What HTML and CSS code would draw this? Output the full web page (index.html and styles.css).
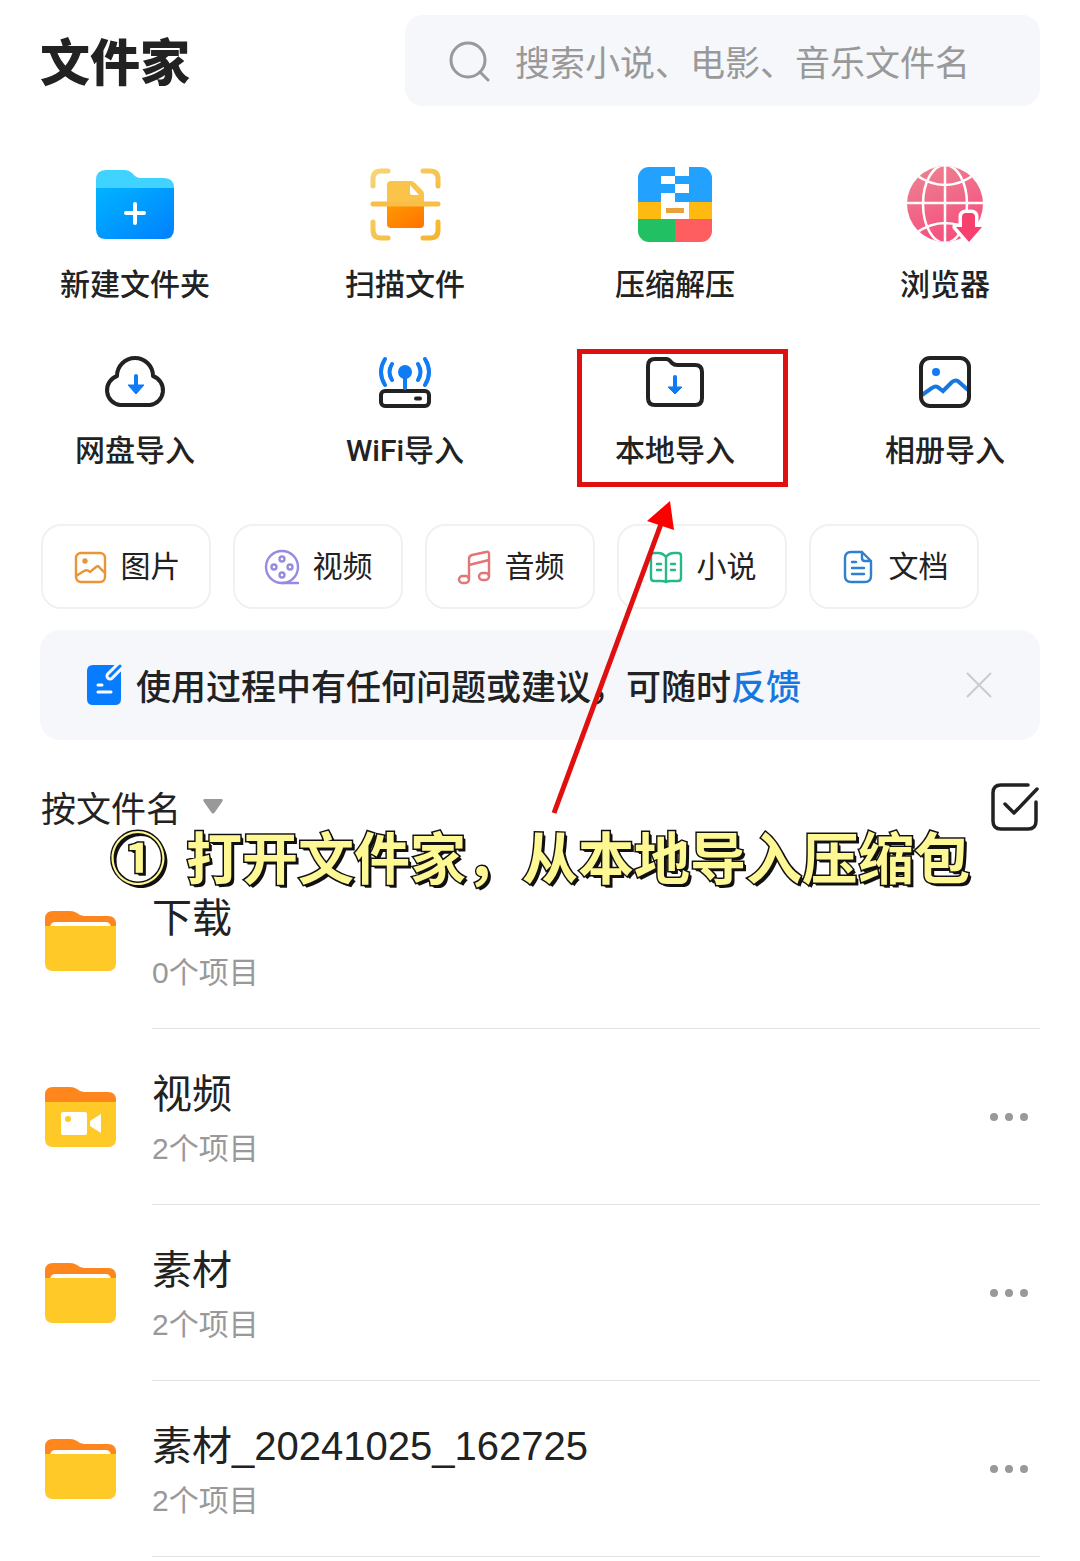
FILE: index.html
```html
<!DOCTYPE html>
<html lang="zh-CN">
<head>
<meta charset="utf-8">
<meta name="viewport" content="width=device-width, initial-scale=1">
<title>文件家</title>
<link rel="stylesheet" href="styles.css">
</head>
<body>
<div class="page">
  <header class="header">
    <h1 class="logo">文件家</h1>
    <label class="search">
      <svg width="42" height="42" viewBox="0 0 42 42" fill="none" stroke="#999" stroke-width="3" stroke-linecap="round" aria-hidden="true"><circle cx="19" cy="20" r="17"/><path d="M31 32l8 8"/></svg>
      <input class="search-input" type="search" aria-label="搜索" placeholder="搜索小说、电影、音乐文件名">
    </label>
  </header>

  <main>
    <nav class="shortcuts" aria-label="快捷功能">
      <button class="shortcut shortcut-large" type="button">
        <span class="shortcut-icon">
          <svg width="78" height="69" viewBox="0 0 78 69" aria-hidden="true">
            <defs><linearGradient id="blue" x1="0" y1="0" x2="1" y2="1"><stop offset="0" stop-color="#00b4ff"/><stop offset="1" stop-color="#0080ff"/></linearGradient></defs>
            <path fill="#40d3ff" d="M0 20V10Q0 0 10 0H29Q33 0 36 3L39 6Q41 8 45 8H68Q78 8 78 18V20Z"/>
            <path fill="url(#blue)" d="M0 18H78V59Q78 69 68 69H10Q0 69 0 59Z"/>
            <path stroke="#fff" stroke-width="4" stroke-linecap="round" d="M39 34V53M30 43H48"/>
          </svg>
        </span>
        <span>新建文件夹</span>
      </button>
      <button class="shortcut shortcut-large" type="button">
        <span class="shortcut-icon">
          <svg width="71" height="73" viewBox="0 0 71 73" fill="none" aria-hidden="true">
            <defs>
              <linearGradient id="orange" x1="0" y1="0" x2="1" y2="1"><stop offset="0" stop-color="#ff9a00"/><stop offset="1" stop-color="#ff7200"/></linearGradient>
              <linearGradient id="amber" x1="0" y1="0" x2="1" y2="1"><stop offset="0" stop-color="#f7d477"/><stop offset="1" stop-color="#f6b42c"/></linearGradient>
            </defs>
            <path stroke="url(#amber)" stroke-width="5" stroke-linecap="round" d="M3 18V11Q3 3 11 3H18M53 3H60Q68 3 68 11V18M3 54V62Q3 70 11 70H18M53 70H60Q68 70 68 62V54"/>
            <path fill="#fac349" d="M17 37V17Q17 13 21 13H41Q43 13 45 15L53 23Q54 24 54 27V37Z"/>
            <path fill="url(#orange)" d="M17 36H54V56Q54 60 50 60H21Q17 60 17 56Z"/>
            <path fill="#fff" d="M40 17L49 27H42Q40 27 40 25Z"/>
            <path stroke="#f8be45" stroke-width="5" stroke-linecap="round" d="M3 36H68"/>
          </svg>
        </span>
        <span>扫描文件</span>
      </button>
      <button class="shortcut shortcut-large" type="button">
        <span class="shortcut-icon">
          <svg width="74" height="75" viewBox="0 0 74 75" aria-hidden="true">
            <clipPath id="zip"><rect width="74" height="75" rx="11"/></clipPath>
            <g clip-path="url(#zip)">
              <path fill="#23a1ff" d="M0 0H74V35H0Z"/><path fill="#ffba12" d="M0 35H74V52H0Z"/>
              <path fill="#20c063" d="M0 52H37V75H0Z"/><path fill="#ff5e60" d="M37 52H74V75H37Z"/>
              <path fill="#fff" d="M37 0H51V9H37ZM23 9H37V17H23ZM37 17H51V26H37ZM23 26H37V35H51V52H23Z"/>
              <path fill="#e9a23b" d="M28 41H46V46H28Z"/>
            </g>
          </svg>
        </span>
        <span>压缩解压</span>
      </button>
      <button class="shortcut shortcut-large" type="button">
        <span class="shortcut-icon">
          <svg width="76" height="76" viewBox="0 0 76 76" fill="none" aria-hidden="true">
            <defs>
              <linearGradient id="pink" x1="0" y1="0" x2="0.400" y2="1"><stop offset="0" stop-color="#ec8592"/><stop offset="1" stop-color="#f5517f"/></linearGradient>
              <clipPath id="globe"><circle cx="38" cy="38" r="38"/></clipPath>
            </defs>
            <circle cx="38" cy="38" r="38" fill="url(#pink)"/>
            <g clip-path="url(#globe)" stroke="#fff" stroke-width="2.500"><path d="M38 0V76M0 37H76M9 9Q38 29 67 9M9 67Q38 47 67 67"/><ellipse cx="38" cy="38" rx="22" ry="39"/></g>
            <path fill="#f8406f" stroke="#fff" stroke-width="7" stroke-linejoin="round" paint-order="stroke" d="M55 61V51Q55 47 59 47H64Q68 47 68 51V61H75L62 76L49 61Z"/>
          </svg>
        </span>
        <span>浏览器</span>
      </button>
      <button class="shortcut" type="button">
        <span class="shortcut-icon">
          <svg width="64" height="52" viewBox="0 0 64 52" fill="none" aria-hidden="true">
            <path stroke="#222" stroke-width="4" stroke-linejoin="round" d="M17 49A15 15 0 0 1 14 20A18 18 0 0 1 50 20A15 15 0 0 1 47 49Z"/>
            <path stroke="#0f7bf5" stroke-width="4" stroke-linecap="round" d="M33 20V32"/><path fill="#0f7bf5" d="M25 29H41L33 38Z" stroke="#0f7bf5" stroke-linejoin="round"/>
          </svg>
        </span>
        <span>网盘导入</span>
      </button>
      <button class="shortcut" type="button">
        <span class="shortcut-icon">
          <svg width="54" height="52" viewBox="0 0 54 52" fill="none" stroke-linecap="round" aria-hidden="true">
            <rect x="3" y="35" width="48" height="15" rx="4" stroke="#222" stroke-width="4"/>
            <path stroke="#222" stroke-width="4" d="M38 42.500H42"/>
            <path stroke="#0f7bf5" stroke-width="4" d="M27 18V32M14 8Q9 16 14 24M40 8Q45 16 40 24M7 3Q-1 16 7 29M47 3Q55 16 47 29"/>
            <circle cx="27" cy="16" r="7" fill="#0f7bf5"/>
          </svg>
        </span>
        <span>WiFi导入</span>
      </button>
      <button class="shortcut shortcut-marked" type="button">
        <span class="shortcut-icon">
          <svg width="58" height="50" viewBox="0 0 58 50" fill="none" aria-hidden="true">
            <path stroke="#222" stroke-width="4" stroke-linejoin="round" d="M2 9Q2 2 9 2H20Q23 2 25 5L26 6Q28 8 31 8H49Q56 8 56 15V41Q56 48 49 48H9Q2 48 2 41Z"/>
            <path stroke="#0f7bf5" stroke-width="4" stroke-linecap="round" d="M29 20V32"/><path fill="#0f7bf5" stroke="#0f7bf5" stroke-linejoin="round" d="M22 30H36L29 37Z"/>
          </svg>
        </span>
        <span>本地导入</span>
      </button>
      <button class="shortcut" type="button">
        <span class="shortcut-icon">
          <svg width="54" height="54" viewBox="0 0 54 54" fill="none" aria-hidden="true">
            <path stroke="#1677e0" stroke-width="4" d="M4 40L14 33Q18 30 21 33L25 36L34 27Q38 24 41 27L50 35"/>
            <circle cx="18" cy="17" r="4" fill="#0f7bf5"/>
            <rect x="3" y="3" width="48" height="48" rx="9" stroke="#222" stroke-width="4"/>
          </svg>
        </span>
        <span>相册导入</span>
      </button>
    </nav>

    <nav class="categories" aria-label="文件分类">
      <button class="chip" type="button">
        <svg width="36" height="36" viewBox="0 0 36 36" fill="none" stroke="#eb9434" stroke-width="2.400" aria-hidden="true"><rect x="4" y="4" width="29" height="29" rx="5"/><path d="M4 27L12 22Q15 20 18 23L24 18Q26 16 28 19L33 24"/><circle cx="13" cy="12" r="1.500" fill="#eb9434"/></svg>
        <span>图片</span>
      </button>
      <button class="chip" type="button">
        <svg width="36" height="36" viewBox="0 0 36 36" fill="none" stroke="#958be0" stroke-width="2.400" stroke-linecap="round" aria-hidden="true"><circle cx="18" cy="18" r="16"/><path d="M18 34H34"/><circle cx="18" cy="10" r="2.500"/><circle cx="10" cy="18" r="2.500"/><circle cx="26" cy="18" r="2.500"/><circle cx="18" cy="26" r="2.500"/></svg>
        <span>视频</span>
      </button>
      <button class="chip" type="button">
        <svg width="36" height="36" viewBox="0 0 36 36" fill="none" stroke="#e37576" stroke-width="2.400" stroke-linejoin="round" aria-hidden="true"><path d="M13 30V10Q13 7 16 6L30 3Q33 2 33 5V27M13 16L33 11"/><rect x="3" y="27" width="10" height="7" rx="3.500"/><rect x="23" y="24" width="10" height="7" rx="3.500"/></svg>
        <span>音频</span>
      </button>
      <button class="chip" type="button">
        <svg width="36" height="36" viewBox="0 0 36 36" fill="none" stroke="#25b98a" stroke-width="2.400" stroke-linejoin="round" stroke-linecap="round" aria-hidden="true"><path d="M18 8Q15 4 10 4H6Q3 4 3 7V29Q3 32 6 32H13Q16 32 18 33Q20 32 23 32H30Q33 32 33 29V7Q33 4 30 4H26Q21 4 18 8ZM18 8V33M9 15H13M9 21H13M23 15H27M23 21H27"/></svg>
        <span>小说</span>
      </button>
      <button class="chip" type="button">
        <svg width="36" height="36" viewBox="0 0 36 36" fill="none" stroke="#2e80d0" stroke-width="2.400" stroke-linejoin="round" stroke-linecap="round" aria-hidden="true"><path d="M22 3H11Q5 3 5 9V27Q5 33 11 33H25Q31 33 31 27V12ZM22 3V9Q22 12 25 12H31M12 13H16M12 19H24M12 25H24"/></svg>
        <span>文档</span>
      </button>
    </nav>

    <section class="notice">
      <svg width="36" height="42" viewBox="0 0 36 42" fill="none" stroke-linecap="round" aria-hidden="true">
        <path fill="#087cff" d="M7 1H29L35 8V35Q35 41 29 41H7Q1 41 1 35V7Q1 1 7 1Z"/>
        <path stroke="#f5f7fa" stroke-width="9" d="M24 12L35 1"/><path stroke="#087cff" stroke-width="3" d="M24 12L34 2"/>
        <path stroke="#fff" stroke-width="3" d="M12 21H16M12 28H25"/>
      </svg>
      <p class="notice-text">使用过程中有任何问题或建议，可随时<a class="notice-link" href="#feedback">反馈</a></p>
      <button class="icon-button" type="button" aria-label="关闭">
        <svg width="26" height="26" viewBox="0 0 26 26" stroke="#c9cbcd" stroke-width="2" aria-hidden="true"><path d="M1 1L25 25M25 1L1 25"/></svg>
      </button>
    </section>

    <div class="toolbar">
      <div class="sort">
        <select class="sort-select" aria-label="排序方式"><option>按文件名</option></select>
        <svg width="20" height="16" viewBox="0 0 20 16" fill="#999" aria-hidden="true"><path d="M2 0H18Q21 0 19 3L12 13Q10 16 8 13L1 3Q-1 0 2 0Z"/></svg>
      </div>
      <button class="select-button" type="button" aria-label="多选">
        <svg width="48" height="48" viewBox="0 0 48 48" fill="none" stroke="#222" stroke-width="3.500" stroke-linecap="round" stroke-linejoin="round" aria-hidden="true"><path d="M37 2H10Q2 2 2 10V38Q2 46 10 46H37Q45 46 45 38V19M14 21L23 30L46 6"/></svg>
      </button>
    </div>

    <ul class="files">
      <li class="file">
        <svg class="file-icon" width="72" height="62" viewBox="0 0 72 62" aria-hidden="true"><path fill="#ff861c" d="M0 20V9Q0 1 8 1H25Q29 1 32 3Q35 6 39 6H63Q71 6 71 14V20Z"/><path fill="#fff" d="M5 17Q6 12 10 12H61Q65 12 66 17Z"/><path fill="#ffc928" d="M0 16H71V53Q71 61 63 61H8Q0 61 0 53Z"/></svg>
        <div class="file-body"><div class="file-text"><h2 class="file-name">下载</h2><p class="file-count">0个项目</p></div></div>
      </li>
      <li class="file">
        <svg class="file-icon" width="72" height="62" viewBox="0 0 72 62" aria-hidden="true"><path fill="#ff861c" d="M0 20V9Q0 1 8 1H25Q29 1 32 3Q35 6 39 6H63Q71 6 71 14V20Z"/><path fill="#ffc928" d="M0 16H71V53Q71 61 63 61H8Q0 61 0 53Z"/><rect x="16" y="26" width="26" height="23" rx="2" fill="#fff"/><path fill="#fff" d="M45 35L56 28V47L45 40Z"/><circle cx="23" cy="33" r="3" fill="#ffc928"/></svg>
        <div class="file-body"><div class="file-text"><h2 class="file-name">视频</h2><p class="file-count">2个项目</p></div>
          <button class="icon-button" type="button" aria-label="更多"><svg width="40" height="10" viewBox="0 0 40 10" fill="#999" aria-hidden="true"><circle cx="5" cy="5" r="4"/><circle cx="20" cy="5" r="4"/><circle cx="35" cy="5" r="4"/></svg></button></div>
      </li>
      <li class="file">
        <svg class="file-icon" width="72" height="62" viewBox="0 0 72 62" aria-hidden="true"><path fill="#ff861c" d="M0 20V9Q0 1 8 1H25Q29 1 32 3Q35 6 39 6H63Q71 6 71 14V20Z"/><path fill="#fff" d="M5 17Q6 12 10 12H61Q65 12 66 17Z"/><path fill="#ffc928" d="M0 16H71V53Q71 61 63 61H8Q0 61 0 53Z"/></svg>
        <div class="file-body"><div class="file-text"><h2 class="file-name">素材</h2><p class="file-count">2个项目</p></div>
          <button class="icon-button" type="button" aria-label="更多"><svg width="40" height="10" viewBox="0 0 40 10" fill="#999" aria-hidden="true"><circle cx="5" cy="5" r="4"/><circle cx="20" cy="5" r="4"/><circle cx="35" cy="5" r="4"/></svg></button></div>
      </li>
      <li class="file">
        <svg class="file-icon" width="72" height="62" viewBox="0 0 72 62" aria-hidden="true"><path fill="#ff861c" d="M0 20V9Q0 1 8 1H25Q29 1 32 3Q35 6 39 6H63Q71 6 71 14V20Z"/><path fill="#fff" d="M5 17Q6 12 10 12H61Q65 12 66 17Z"/><path fill="#ffc928" d="M0 16H71V53Q71 61 63 61H8Q0 61 0 53Z"/></svg>
        <div class="file-body"><div class="file-text"><h2 class="file-name">素材_20241025_162725</h2><p class="file-count">2个项目</p></div>
          <button class="icon-button" type="button" aria-label="更多"><svg width="40" height="10" viewBox="0 0 40 10" fill="#999" aria-hidden="true"><circle cx="5" cy="5" r="4"/><circle cx="20" cy="5" r="4"/><circle cx="35" cy="5" r="4"/></svg></button></div>
      </li>
    </ul>
  </main>

  <svg class="arrow" width="128" height="316" viewBox="0 0 128 316" aria-hidden="true"><path stroke="#e01010" stroke-width="5" d="M4 313L111 24"/><path fill="#fc0000" d="M120 1L97 21L124 30Z"/></svg>
  <p class="caption"><span>①</span><span>打开文件家，从本地导入压缩包</span></p>
</div>
</body>
</html>
```
FILE: styles.css
```css
* {
  box-sizing: border-box;
}

body {
  margin: 0;
  background: #fff;
  color: #222;
  font-family: "Noto Sans CJK SC", sans-serif;
}

h1, h2, p, ul {
  margin: 0;
  padding: 0;
}

button, input, select {
  border: 0;
  padding: 0;
  background: none;
  color: inherit;
  font: inherit;
}

svg {
  display: block;
  flex: none;
}

.page {
  position: relative;
  padding: 15px 0 4px;
}

.header {
  display: flex;
  align-items: center;
  justify-content: space-between;
  padding: 0 40px;
}

.logo {
  padding-bottom: 4px;
  font-size: 50px;
  line-height: 70px;
  font-weight: 900;
}

.search {
  display: flex;
  align-items: center;
  gap: 24px;
  width: 635px;
  height: 91px;
  padding: 0 44px;
  border-radius: 18px;
  background: #f5f7fa;
}

.search-input {
  flex: 1;
  min-width: 0;
  height: 56px;
  font-size: 35px;
  outline: none;
}

.search-input::placeholder {
  color: #999;
}

.shortcuts {
  display: grid;
  grid-template-columns: repeat(4, 1fr);
  row-gap: 46px;
  padding-top: 56px;
}

.shortcut {
  position: relative;
  display: flex;
  flex-direction: column;
  align-items: center;
  gap: 18px;
  font-family: Roboto, "Noto Sans CJK SC", sans-serif;
  font-size: 30px;
  line-height: 42px;
  font-weight: 500;
}

.shortcut-icon {
  display: flex;
  align-items: center;
  height: 60px;
}

.shortcut-large .shortcut-icon {
  height: 84px;
}

.shortcut-marked::after {
  content: "";
  position: absolute;
  inset: -3px 22px -15px 37px;
  border: 5px solid #e01010;
}

.categories {
  display: flex;
  gap: 22px;
  padding: 52px 41px 0;
}

.chip {
  display: flex;
  align-items: center;
  justify-content: center;
  gap: 13px;
  width: 170px;
  height: 85px;
  border: 2px solid #f1f1f2;
  border-radius: 20px;
  font-family: Roboto, "Noto Sans CJK SC", sans-serif;
  font-size: 30px;
  line-height: 42px;
}

.notice {
  display: flex;
  align-items: center;
  gap: 14px;
  height: 110px;
  margin: 21px 40px 0;
  padding: 0 39px 0 46px;
  border-radius: 20px;
  background: #f5f7fa;
}

.notice-text {
  flex: 1;
  font-size: 35px;
  line-height: 50px;
  font-weight: 500;
}

.notice-link {
  color: #1677e0;
  text-decoration: none;
}

.icon-button {
  display: flex;
  align-items: center;
  justify-content: center;
  min-width: 44px;
  height: 44px;
}

.toolbar {
  display: flex;
  align-items: center;
  justify-content: space-between;
  padding: 43px 41px 22px;
}

.sort {
  display: flex;
  align-items: center;
  gap: 21px;
}

.sort-select {
  appearance: none;
  height: 48px;
  font-size: 35px;
  line-height: 48px;
}

.files {
  list-style: none;
}

.file {
  display: flex;
  align-items: center;
  gap: 35px;
  padding: 0 40px 0 45px;
}

.file-body {
  display: flex;
  flex: 1;
  align-items: center;
  justify-content: space-between;
  height: 176px;
  padding-right: 9px;
  border-bottom: 1px solid #e2e2e2;
}

.file-text {
  display: grid;
  gap: 6px;
  padding-top: 2px;
  font-family: "Liberation Sans", "Noto Sans CJK SC", sans-serif;
}

.file-name {
  font-size: 40px;
  line-height: 56px;
  font-weight: 400;
}

.file-count {
  color: #999;
  font-size: 30px;
  line-height: 42px;
}

.arrow {
  position: absolute;
  top: 500px;
  left: 550px;
}

.caption {
  position: absolute;
  top: 817px;
  left: 110px;
  display: flex;
  gap: 20px;
  color: #fdf794;
  font-size: 56px;
  line-height: 76px;
  font-weight: 700;
  white-space: nowrap;
  -webkit-text-stroke: 3px #111;
  paint-order: stroke fill;
  text-shadow: 1px 1px #111, 2px 2px #111, 3px 3px #111;
}
```
